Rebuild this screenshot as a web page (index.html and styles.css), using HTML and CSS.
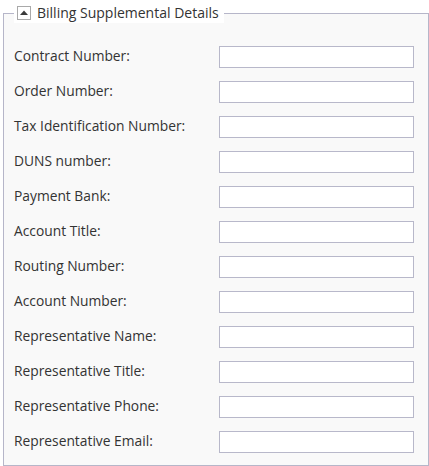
FILE: index.html
```html
<!DOCTYPE html>
<html lang="en">
<head>
<meta charset="utf-8">
<title>Billing Supplemental Details</title>
<link rel="stylesheet" href="styles.css">
</head>
<body>
<fieldset class="group">
  <legend class="group-title">
    <span class="toggle"><svg width="8" height="5" viewBox="0 0 8 5"><polygon points="0,5 4,0.5 8,5" fill="#3a3a3a"/></svg></span>
    <span class="title-text">Billing Supplemental Details</span>
  </legend>
  <div class="form-grid">
    <label class="field-label">Contract Number:</label><input class="field-input" type="text">
    <label class="field-label">Order Number:</label><input class="field-input" type="text">
    <label class="field-label">Tax Identification Number:</label><input class="field-input" type="text">
    <label class="field-label">DUNS number:</label><input class="field-input" type="text">
    <label class="field-label">Payment Bank:</label><input class="field-input" type="text">
    <label class="field-label">Account Title:</label><input class="field-input" type="text">
    <label class="field-label">Routing Number:</label><input class="field-input" type="text">
    <label class="field-label">Account Number:</label><input class="field-input" type="text">
    <label class="field-label">Representative Name:</label><input class="field-input" type="text">
    <label class="field-label">Representative Title:</label><input class="field-input" type="text">
    <label class="field-label">Representative Phone:</label><input class="field-input" type="text">
    <label class="field-label">Representative Email:</label><input class="field-input" type="text">
  </div>
</fieldset>
</body>
</html>
```
FILE: styles.css
```css
html, body {
  margin: 0;
  padding: 0;
  background: #ffffff;
}

body {
  padding: 3px 1px 0 3px;
  font-family: "Open Sans", "Noto Sans", sans-serif;
  font-size: 13.8px;
  color: #333333;
}

.group {
  box-sizing: border-box;
  width: 426px;
  height: 463px;
  margin: 0;
  padding: 0 13px 0 10px;
  border: 1px solid #b6b6c9;
  background: #f9f9f9;
}

.group-title {
  display: flex;
  align-items: center;
  height: 20px;
  padding: 0 5px 0 3px;
  background: #ffffff;
}

.toggle {
  box-sizing: border-box;
  width: 14px;
  height: 14px;
  border: 1px solid #a9a9a9;
  background: #ffffff;
  display: flex;
  align-items: center;
  justify-content: center;
  padding-bottom: 2px;
  margin-right: 6px;
}

.toggle svg {
  display: block;
}

.title-text {
  font-size: 14px;
  color: #333333;
  line-height: 20px;
}

.form-grid {
  display: grid;
  grid-template-columns: 205px 195px;
  grid-auto-rows: 22px;
  row-gap: 13px;
  align-items: center;
  padding-top: 23px;
}

.field-label {
  white-space: nowrap;
  line-height: 20px;
  margin-top: -2px;
}

.field-input {
  box-sizing: border-box;
  width: 195px;
  height: 22px;
  margin: 0;
  padding: 0 4px;
  border: 1px solid #b8b8ca;
  background: #ffffff;
  font: inherit;
  outline: none;
}
```
